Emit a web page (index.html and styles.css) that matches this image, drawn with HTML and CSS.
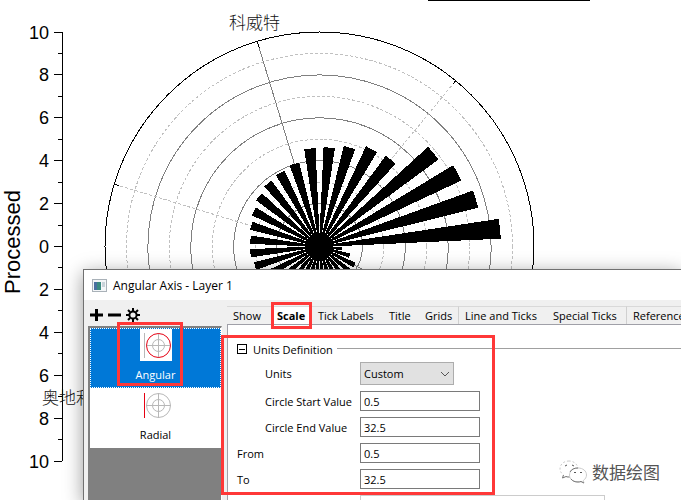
FILE: index.html
```
<!DOCTYPE html>
<html lang="en">
<head>
  <meta charset="UTF-8">
  <meta name="viewport" content="width=device-width, initial-scale=1">
  <title>Angular Axis - Layer 1</title>
  <link rel="stylesheet" href="styles.css">
</head>
<body>
  <!-- Graph -->
  <svg class="graph" width="681" height="500">
    <line class="black" x1="428" y1="0.5" x2="590" y2="0.5"/>
    <g id="rings"></g>
    <g id="spokes"></g>
    <g id="bars"></g>
    <g id="axis"></g>
    <text class="axis-title" transform="translate(20 294) rotate(-90)">Processed</text>
    <text class="country" x="229" y="29">科威特</text>
    <text class="country" x="42" y="404">奥地利</text>
  </svg>

  <!-- Dialog -->
  <div class="dialog">
    <div class="titlebar">
      <svg width="15" height="13" viewBox="0 0 15 13">
        <rect x="0.5" y="0.5" width="14" height="12" fill="#f4f6f8" stroke="#a9b1b8"/>
        <rect x="2" y="3" width="7" height="8" fill="#3b8a80"/>
        <rect x="2" y="3" width="3" height="8" fill="#4a6fa0"/>
        <rect x="10" y="3" width="3" height="5" fill="#c9d3da"/>
      </svg>
      <span>Angular Axis - Layer 1</span>
    </div>
    <div class="content">
      <div class="side">
        <div class="tools">
          <button type="button" aria-label="Add">
            <svg width="13" height="14" viewBox="0 0 13 14"><path d="M0 7H13M6.500 1V13" stroke="#000" stroke-width="3"/></svg>
          </button>
          <button type="button" aria-label="Remove">
            <svg width="13" height="14" viewBox="0 0 13 14"><path d="M0 7H13" stroke="#000" stroke-width="3"/></svg>
          </button>
          <button type="button" aria-label="Settings">
            <svg width="14" height="14" viewBox="0 0 14 14" fill="none" stroke="#000">
              <circle cx="7" cy="7" r="3.600" stroke-width="2"/>
              <path d="M7 0V3M7 11V14M0 7H3M11 7H14M2 2L4 4M10 10L12 12M12 2L10 4M4 10L2 12" stroke-width="2"/>
            </svg>
          </button>
        </div>
        <div class="list">
          <button type="button" class="item selected">
            <svg width="32" height="32" viewBox="0 0 32 32" fill="none" stroke="#b8b8b8">
              <rect width="32" height="32" fill="#fff" stroke="none"/>
              <path d="M4.500 4V29M18.500 4V29M6 16.500H31"/>
              <circle cx="18.500" cy="16.500" r="6"/>
              <circle cx="18.500" cy="16.500" r="12" stroke="#e60012"/>
            </svg>
            <span>Angular</span>
          </button>
          <button type="button" class="item">
            <svg width="32" height="32" viewBox="0 0 32 32" fill="none" stroke="#b8b8b8">
              <path d="M18.500 4V29M6 16.500H31"/>
              <path d="M4.500 4V29" stroke="#e60012"/>
              <circle cx="18.500" cy="16.500" r="6"/>
              <circle cx="18.500" cy="16.500" r="12"/>
            </svg>
            <span>Radial</span>
          </button>
        </div>
      </div>
      <div class="main">
        <div class="tabs">
          <button type="button">Show</button>
          <button type="button" class="active">Scale</button>
          <button type="button">Tick Labels</button>
          <button type="button">Title</button>
          <button type="button" class="sep">Grids</button>
          <button type="button">Line and Ticks</button>
          <button type="button" class="sep">Special Ticks</button>
          <button type="button">Reference</button>
        </div>
        <form class="panel">
          <div class="group">
            <button type="button" class="toggle" aria-label="Collapse"></button>
            <span>Units Definition</span>
            <hr>
          </div>
          <div class="fields">
            <label class="indent" for="units">Units</label>
            <div class="combo">
              <select id="units"><option>Custom</option></select>
              <svg width="10" height="6" viewBox="0 0 10 6"><path d="M1 1L5 5L9 1" fill="none" stroke="#555"/></svg>
            </div>
            <label class="indent" for="start">Circle Start Value</label>
            <input type="text" id="start" value="0.5">
            <label class="indent" for="end">Circle End Value</label>
            <input type="text" id="end" value="32.5">
            <label for="from">From</label>
            <input type="text" id="from" value="0.5">
            <label for="to">To</label>
            <input type="text" id="to" value="32.5">
            <input type="text" class="next" aria-label="Step">
          </div>
        </form>
      </div>
    </div>
  </div>

  <!-- Marks -->
  <div class="mark mark-item"></div>
  <div class="mark mark-tab"></div>
  <div class="mark mark-form"></div>

  <div class="watermark">
    <svg width="28" height="24" viewBox="0 0 28 24" fill="#fff" stroke="#ccc">
      <path d="M10 1C4.500 1 1 4.500 1 9c0 2.500 1.500 4.500 3.500 6L3.500 18l3.500-1.500c1 .4 2.500.6 4 .5C17 17 19 13 19 9S15.500 1 10 1z" stroke-dasharray="2 2"/>
      <path d="M4.500 15L3.500 18l3.500-1.500c1 .4 2.500.6 4 .5" stroke="#777"/>
      <path d="M19 8c-5 0-8.500 3-8.500 7s3.500 7 8.500 7c1 0 2-.2 3-.5l3 1.500-.7-2.500C26.500 19 27.500 17 27.500 15c0-4-3.500-7-8.500-7z"/>
      <path d="M12 19c1.500 2 4 3 7 3 1 0 2-.2 3-.5l3 1.500M11 12c1.500-3 4.500-4 8-4" fill="none" stroke="#777"/>
      <path d="M6 6l2-1M13 5l2 1M15 12.500h2M21 12.500h2" stroke="#555"/>
    </svg>
    <span>数据绘图</span>
  </div>

  <script>
    const cx = 319.5, cy = 246.5, unit = 21.45;
    // bar lengths in px, counterclockwise from the right
    const bars = [181, 163, 156, 147, 112, 110, 103, 99, 98, 86, 83, 81, 78, 74, 71, 69,
                  69, 67, 65, 62, 60, 58, 55, 52, 50, 48, 46, 44, 42, 39, 31, 22];

    function point(r, deg) {
      const a = deg * Math.PI / 180;
      return [cx + r * Math.cos(a), cy - r * Math.sin(a)];
    }

    function add(id, tag, attrs, text) {
      const el = document.createElementNS('http://www.w3.org/2000/svg', tag);
      for (const key in attrs) el.setAttribute(key, attrs[key]);
      if (text !== undefined) el.textContent = text;
      document.getElementById(id).appendChild(el);
    }

    function line(id, cls, a, b) {
      add(id, 'line', { class: cls, x1: a[0], y1: a[1], x2: b[0], y2: b[1] });
    }

    for (let i = 1; i <= 10; i++) {
      const cls = i === 10 ? 'black' : i % 2 ? 'minor' : 'major';
      add('rings', 'circle', { class: cls, cx: cx, cy: cy, r: i * unit });
    }

    [50.6, 106.9, 163.1, 331.9].forEach((deg, i) => {
      line('spokes', i % 2 ? 'major' : 'minor', point(0, 0), point(214, deg));
      line('spokes', 'black', point(i % 2 ? 207 : 210, deg), point(214, deg));
    });

    bars.forEach((r, i) => {
      const mid = 5.625 + i * 11.25;
      const pts = [point(0, 0), point(r, mid - 3), point(r, mid + 3)];
      add('bars', 'polygon', { points: pts.join(' ') });
    });
    add('bars', 'circle', { cx: cx, cy: cy, r: 14 });

    line('axis', 'black', [62.5, 32], [62.5, 461]);
    for (let i = 0; i <= 20; i++) {
      const y = Math.floor(32 + i * unit) + 0.5;
      line('axis', 'black', [i % 2 ? 58 : 54, y], [62, y]);
      if (i % 2 === 0) add('axis', 'text', { x: 49, y: y + 6 }, Math.abs(10 - i));
    }
  </script>
</body>
</html>
```
FILE: styles.css
```
* {
  box-sizing: border-box;
}
body {
  margin: 0;
  height: 100vh;
  overflow: hidden;
  position: relative;
  background: #fff;
  color: #000;
  font-family: "Open Sans", "Noto Sans", sans-serif;
  font-size: 12px;
}
button, input, select {
  font: inherit;
  color: inherit;
  border-radius: 0;
}
button {
  border: none;
  background: none;
  padding: 0;
}

/* graph */
.graph {
  display: block;
  shape-rendering: crispEdges;
}
.graph line, .graph circle {
  fill: none;
}
.black {
  stroke: #000;
}
.major {
  stroke: #808080;
}
.minor {
  stroke: #c0c0c0;
  stroke-dasharray: 3 2;
}
#bars polygon {
  stroke: #000;
}
#bars circle {
  fill: #000;
}
#axis text {
  font-family: "Liberation Sans", Arial, sans-serif;
  font-size: 18px;
  text-anchor: end;
}
.axis-title {
  font-family: "Liberation Sans", Arial, sans-serif;
  font-size: 22px;
}
.country {
  font-family: "Noto Sans CJK SC", sans-serif;
  font-size: 17px;
  font-weight: 300;
  fill: #111;
}

/* dialog */
.dialog {
  position: absolute;
  top: 269px;
  left: 83px;
  right: -1px;
  bottom: -1px;
  display: flex;
  flex-direction: column;
  background: #f0f0f0;
  border: 1px solid #707070;
  box-shadow: 0 4px 18px rgba(0, 0, 0, 0.4);
}
.titlebar {
  display: flex;
  align-items: center;
  gap: 6px;
  height: 30px;
  padding-left: 8px;
  background: #fff;
}
.content {
  flex: 1;
  display: flex;
  min-height: 0;
  font-size: 11px;
}
.side {
  width: 138px;
  padding-left: 4px;
  display: flex;
  flex-direction: column;
}
.tools {
  display: flex;
  align-items: center;
  gap: 5px;
  height: 26px;
  padding: 4px 2px 0;
}
.tools svg, .item svg {
  display: block;
}
.list {
  flex: 1;
  background: #808080;
  border-top: 2px solid #808080;
  border-left: 2px solid #808080;
  border-right: 1px solid #fff;
}
.item {
  display: flex;
  flex-direction: column;
  align-items: center;
  gap: 6px;
  width: 100%;
  height: 60px;
  background: #fff;
  border: 1px solid #fff;
}
.item.selected {
  background: #0078d7;
  border: 1px dotted #fff;
  color: #fff;
}
.main {
  flex: 1;
  min-width: 0;
  padding: 6px 0 0 5px;
  display: flex;
  flex-direction: column;
}
.tabs {
  display: grid;
  grid-template-columns: 44px 41px 71px 36px 40px 88px 80px 1fr;
  flex: none;
  height: 18px;
}
.tabs button {
  border-top: 1px solid #d9d9d9;
  padding-left: 6px;
  text-align: left;
  white-space: nowrap;
}
.tabs .sep {
  border-right: 1px solid #d0d0d0;
}
.tabs .active {
  background: #fff;
  font-weight: bold;
}
.panel {
  flex: none;
  background: #fff;
  border-top: 1px solid #a0a0a8;
  border-left: 1px solid #a0a0a8;
  padding: 16px 0 0 9px;
}
.group {
  display: flex;
  align-items: center;
  gap: 6px;
  height: 16px;
}
.group hr {
  flex: 1;
  border: none;
  border-top: 1px solid #a0a0a0;
  margin: 0 0 1px -2px;
}
.toggle {
  display: flex;
  align-items: center;
  justify-content: center;
  width: 10px;
  height: 10px;
  border: 1px solid #000;
}
.toggle::before {
  content: "";
  width: 6px;
  height: 1px;
  background: #000;
}
.fields {
  display: grid;
  grid-template-columns: 123px 120px;
  row-gap: 6px;
  align-items: center;
  padding-top: 5px;
}
.indent {
  padding-left: 28px;
}
.fields input {
  width: 120px;
  height: 20px;
  padding: 0 3px;
  border: 1px solid #7a7a7a;
  background: #fff;
}
.fields .next {
  grid-column: 2;
  width: 245px;
  border-color: #ccc;
}
.combo {
  position: relative;
  width: 94px;
  height: 23px;
}
.combo select {
  appearance: none;
  width: 100%;
  height: 100%;
  padding: 0 3px;
  border: 1px solid #adadad;
  background: #e1e1e1;
}
.combo svg {
  position: absolute;
  right: 4px;
  top: 9px;
  pointer-events: none;
}

/* red marks over the dialog */
.mark {
  position: absolute;
  border: 3px solid #ff3838;
  pointer-events: none;
}
.mark-item {
  left: 117px;
  top: 322px;
  width: 66px;
  height: 64px;
}
.mark-tab {
  left: 271px;
  top: 302px;
  width: 41px;
  height: 27px;
}
.mark-form {
  left: 221px;
  top: 335px;
  width: 274px;
  height: 160px;
}

.watermark {
  position: absolute;
  right: 21px;
  bottom: 16px;
  display: flex;
  align-items: center;
  gap: 5px;
  font-family: "Noto Sans CJK SC", sans-serif;
  font-size: 17px;
  color: #555;
}
```
